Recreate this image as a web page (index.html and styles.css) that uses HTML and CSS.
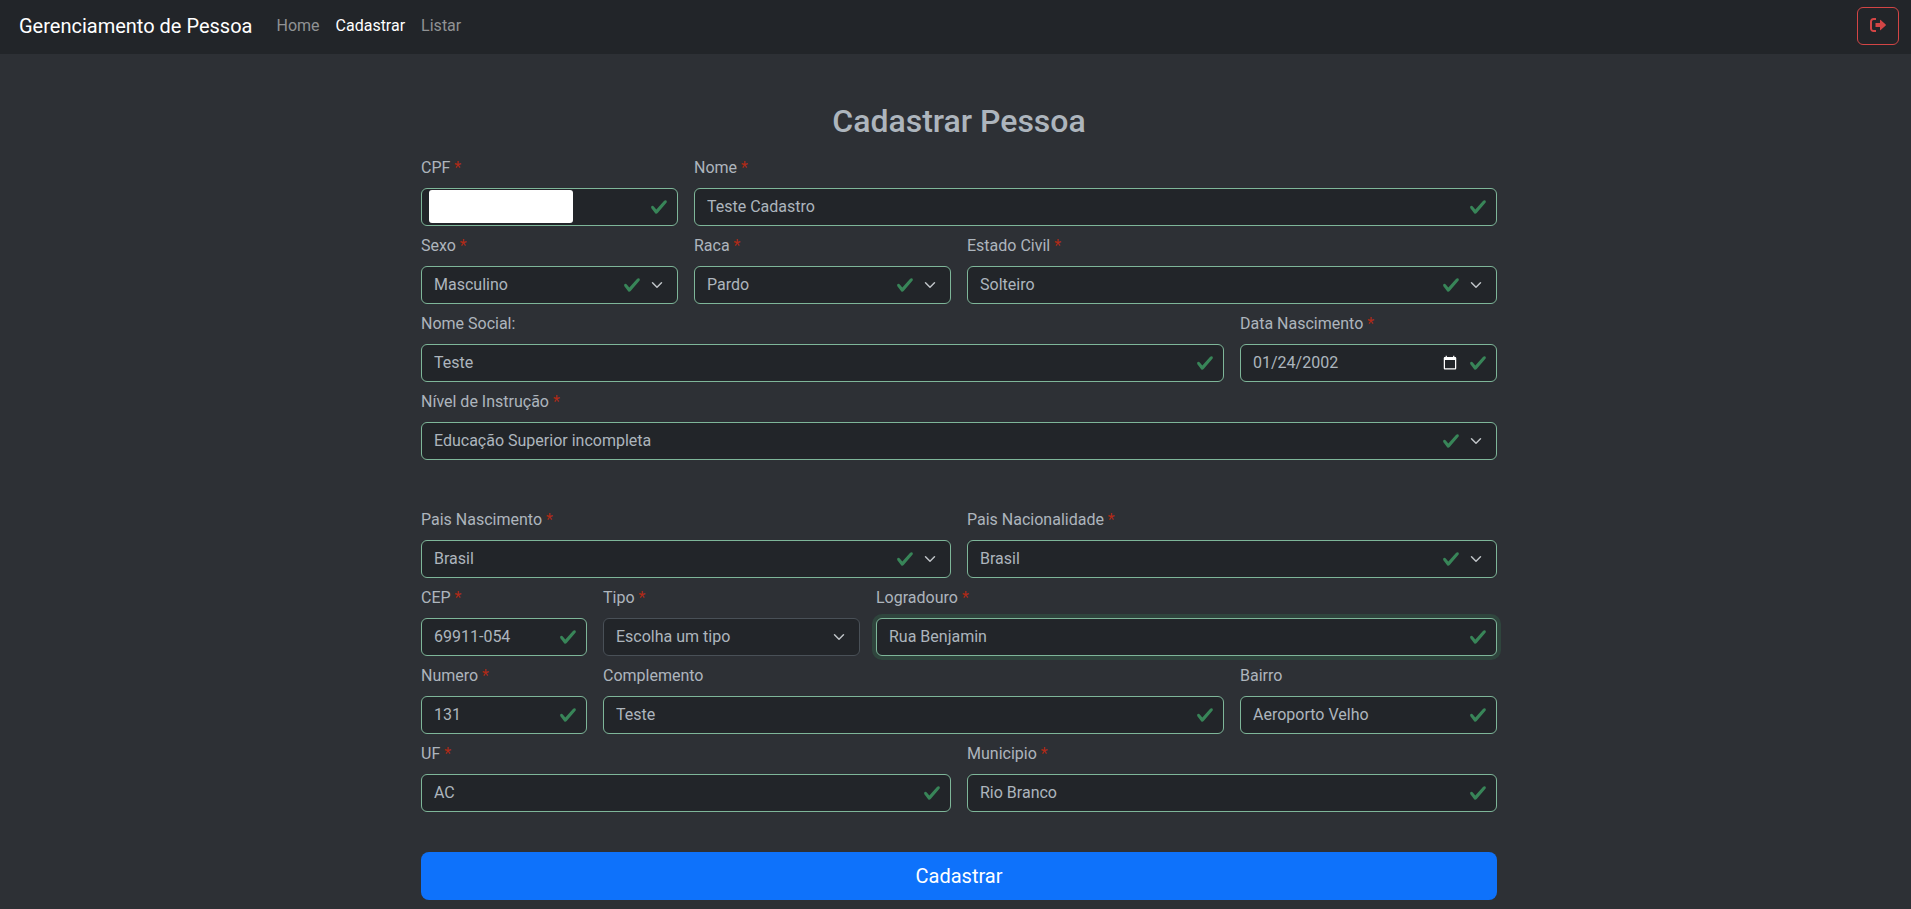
FILE: index.html
```html
<!DOCTYPE html>
<html lang="pt-BR">
<head>
<meta charset="utf-8">
<meta name="viewport" content="width=device-width, initial-scale=1">
<title>Cadastrar Pessoa</title>
<link rel="stylesheet" href="styles.css">
</head>
<body>
<header class="navbar">
  <a class="brand" href="#">Gerenciamento de Pessoa</a>
  <nav class="nav">
    <a class="nav-link" href="#">Home</a>
    <a class="nav-link active" href="#" aria-current="page">Cadastrar</a>
    <a class="nav-link" href="#">Listar</a>
  </nav>
  <button class="logout" type="button" aria-label="Sair">
    <svg viewBox="0 0 16 14" width="16" height="14" aria-hidden="true">
      <path d="M6 1H3.500A2.500 2.500 0 0 0 1 3.500v7A2.500 2.500 0 0 0 3.500 13H6" fill="none" stroke="currentColor" stroke-width="2"/>
      <path d="M5.500 5H10V2.300q0-.9.700-.3l5 4.500q.5.500 0 1l-5 4.500q-.7.600-.7-.3V9H5.500z" fill="currentColor"/>
    </svg>
  </button>
</header>
<main class="page">
  <h1 class="title">Cadastrar Pessoa</h1>
  <form class="form">
    <div class="grid">
      <div class="field span-3 masked"><label for="cpf">CPF <span class="req">*</span></label><input class="control valid" id="cpf" type="text"><span class="mask"></span></div>
      <div class="field span-9"><label for="nome">Nome <span class="req">*</span></label><input class="control valid" id="nome" type="text" value="Teste Cadastro"></div>
      <div class="field span-3"><label for="sexo">Sexo <span class="req">*</span></label><select class="control select valid" id="sexo"><option>Masculino</option></select></div>
      <div class="field span-3"><label for="raca">Raca <span class="req">*</span></label><select class="control select valid" id="raca"><option>Pardo</option></select></div>
      <div class="field span-6"><label for="civil">Estado Civil <span class="req">*</span></label><select class="control select valid" id="civil"><option>Solteiro</option></select></div>
      <div class="field span-9"><label for="social">Nome Social:</label><input class="control valid" id="social" type="text" value="Teste"></div>
      <div class="field span-3"><label for="nasc">Data Nascimento <span class="req">*</span></label><input class="control valid" id="nasc" type="date" value="2002-01-24"></div>
      <div class="field span-12"><label for="nivel">Nível de Instrução <span class="req">*</span></label><select class="control select valid" id="nivel"><option>Educação Superior incompleta</option></select></div>
    </div>
    <div class="grid">
      <div class="field span-6"><label for="pais">Pais Nascimento <span class="req">*</span></label><select class="control select valid" id="pais"><option>Brasil</option></select></div>
      <div class="field span-6"><label for="nac">Pais Nacionalidade <span class="req">*</span></label><select class="control select valid" id="nac"><option>Brasil</option></select></div>
      <div class="field span-2"><label for="cep">CEP <span class="req">*</span></label><input class="control valid" id="cep" type="text" value="69911-054"></div>
      <div class="field span-3"><label for="tipo">Tipo <span class="req">*</span></label><select class="control select" id="tipo"><option>Escolha um tipo</option></select></div>
      <div class="field span-7"><label for="logradouro">Logradouro <span class="req">*</span></label><input class="control valid focused" id="logradouro" type="text" value="Rua Benjamin"></div>
      <div class="field span-2"><label for="numero">Numero <span class="req">*</span></label><input class="control valid" id="numero" type="text" value="131"></div>
      <div class="field span-7"><label for="complemento">Complemento</label><input class="control valid" id="complemento" type="text" value="Teste"></div>
      <div class="field span-3"><label for="bairro">Bairro</label><input class="control valid" id="bairro" type="text" value="Aeroporto Velho"></div>
      <div class="field span-6"><label for="uf">UF <span class="req">*</span></label><input class="control valid" id="uf" type="text" value="AC"></div>
      <div class="field span-6"><label for="municipio">Municipio <span class="req">*</span></label><input class="control valid" id="municipio" type="text" value="Rio Branco"></div>
    </div>
    <button class="submit" type="submit">Cadastrar</button>
  </form>
</main>
</body>
</html>
```
FILE: styles.css
```css
:root {
  color-scheme: dark;
  --surface: #222529;
  --canvas: #2d3035;
  --text: #adb5bd;
  --check: url("data:image/svg+xml,%3csvg xmlns='http://www.w3.org/2000/svg' viewBox='0 0 8 8'%3e%3cpath fill='%23388558' d='M2.3 6.73.6 4.53c-.4-1.04.46-1.4 1.1-.8l1.1 1.4 3.4-3.8c.6-.63 1.6-.27 1.2.7l-4 4.6c-.43.5-.8.4-1.1.1z'/%3e%3c/svg%3e");
  --chevron: url("data:image/svg+xml,%3csvg xmlns='http://www.w3.org/2000/svg' viewBox='0 0 16 16'%3e%3cpath fill='none' stroke='%23bdc1c5' stroke-linecap='round' stroke-linejoin='round' stroke-width='2' d='m2 5 6 6 6-6'/%3e%3c/svg%3e");
}

* {
  box-sizing: border-box;
}

body {
  margin: 0;
  background: var(--canvas);
  color: var(--text);
  font: 400 16px/24px Roboto, "Liberation Sans", sans-serif;
}

.navbar {
  display: flex;
  align-items: center;
  padding: 7px 12px 9px 19px;
  background: var(--surface);
}

.brand {
  margin-right: 16px;
  color: #fff;
  font-size: 20px;
  line-height: 30px;
  text-decoration: none;
}

.nav {
  display: flex;
}

.nav-link {
  padding: 0 8px;
  color: #909294;
  text-decoration: none;
}

.nav-link.active {
  color: #fff;
}

.logout {
  display: flex;
  align-items: center;
  justify-content: center;
  width: 42px;
  height: 38px;
  margin-left: auto;
  padding: 0 0 2px;
  border: 1px solid #d24545;
  border-radius: 6px;
  background: transparent;
  color: #d24545;
}

.page {
  max-width: 1085px;
  margin: 0 auto;
  padding: 48px 1px 8px 8px;
}

.title {
  margin: 0 0 16px;
  font-size: 32px;
  font-weight: 500;
  line-height: 38px;
  text-align: center;
}

.form {
  display: flex;
  flex-direction: column;
  gap: 48px;
}

.grid {
  display: grid;
  grid-template-columns: repeat(12, minmax(0, 1fr));
  gap: 8px 16px;
}

.field {
  display: flex;
  flex-direction: column;
  gap: 8px;
}

.span-2 { grid-column: span 2; }
.span-3 { grid-column: span 3; }
.span-6 { grid-column: span 6; }
.span-7 { grid-column: span 7; }
.span-9 { grid-column: span 9; }
.span-12 { grid-column: span 12; }

.req {
  color: #b02a17;
}

.control {
  width: 100%;
  height: 38px;
  padding: 6px 12px;
  border: 1px solid #495057;
  border-radius: 6px;
  background-color: var(--surface);
  background-repeat: no-repeat;
  color: var(--text);
  font: inherit;
  appearance: none;
}

.control[type="text"] {
  padding-top: 5px;
  padding-bottom: 7px;
}

.control::-webkit-datetime-edit-month-field,
.control::-webkit-datetime-edit-day-field,
.control::-webkit-datetime-edit-year-field {
  padding: 0;
}

.valid {
  padding-right: 36px;
  border-color: #7eb699;
  background-image: var(--check);
  background-position: right 9px center;
  background-size: 18px 18px;
}

.select {
  background-image: var(--chevron);
  background-position: right 12px center;
  background-size: 16px 12px;
}

.select.valid {
  padding-right: 66px;
  background-image: var(--chevron), var(--check);
  background-position: right 12px center, center right 36px;
  background-size: 16px 12px, 18px 18px;
}

.focused {
  outline: 0;
  box-shadow: 0 0 0 4px rgba(56, 133, 88, .25);
}

.masked {
  position: relative;
}

/* covers the private document number */
.mask {
  position: absolute;
  bottom: 3px;
  left: 8px;
  width: 144px;
  height: 33px;
  border-radius: 3px;
  background: #fff;
}

.submit {
  height: 48px;
  margin-top: -8px;
  border: 0;
  border-radius: 8px;
  background: #0e72fb;
  color: #fff;
  font: inherit;
  font-size: 20px;
}
```
